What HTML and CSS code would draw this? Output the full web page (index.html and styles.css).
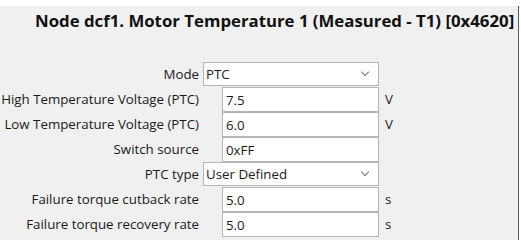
FILE: index.html
```html
<!DOCTYPE html>
<html lang="en">
<head>
  <meta charset="UTF-8">
  <title>Motor Temperature 1</title>
  <link rel="stylesheet" href="styles.css">
</head>
<body>
  <div class="panel">
    <h1>Node dcf1. Motor Temperature 1 (Measured - T1) [0x4620]</h1>

    <div class="form">
      <label>Mode</label>
      <div class="select"><span>PTC</span><span class="caret"></span></div>
      <span></span>

      <label>High Temperature Voltage (PTC)</label>
      <input type="text" value="7.5">
      <span class="unit">V</span>

      <label>Low Temperature Voltage (PTC)</label>
      <input type="text" value="6.0">
      <span class="unit">V</span>

      <label>Switch source</label>
      <input type="text" value="0xFF">
      <span></span>

      <label>PTC type</label>
      <div class="select"><span>User Defined</span><span class="caret"></span></div>
      <span></span>

      <label>Failure torque cutback rate</label>
      <input type="text" value="5.0">
      <span class="unit">s</span>

      <label>Failure torque recovery rate</label>
      <input type="text" value="5.0">
      <span class="unit">s</span>
    </div>
  </div>
</body>
</html>
```

FILE: styles.css
```css
body {
  margin: 0;
  background: #ffffff;
  font-family: 'Open Sans', 'Noto Sans', sans-serif;
  color: #1a1a1a;
}

.panel {
  width: 518px;
  height: 234px;
  margin-top: 6px;
  background: #f0f0f0;
  border-right: 1px solid #5a5a5a;
  overflow: hidden;
}

h1 {
  margin: 0;
  padding: 4px 0 0 35px;
  font-size: 16.8px;
  font-weight: bold;
  line-height: 21px;
  color: #111;
  white-space: nowrap;
}

.form {
  display: grid;
  grid-template-columns: 199px 176px 1fr;
  column-gap: 4px;
  margin-top: 31px;
  font-size: 13.3px;
}

.form label {
  display: flex;
  justify-content: flex-end;
  line-height: 25px;
  white-space: nowrap;
}

.form input {
  box-sizing: border-box;
  width: 157px;
  height: 25px;
  margin: 0 0 0 19px;
  padding: 0 3px;
  border: 1px solid #b4b4b4;
  background: #fff;
  font: inherit;
  color: #1a1a1a;
}

.select {
  box-sizing: border-box;
  height: 24px;
  margin-bottom: 1px;
  padding: 0 2px;
  border: 1px solid #b4b4b4;
  background: #fff;
  display: flex;
  align-items: center;
  justify-content: space-between;
  line-height: 22px;
}

.caret {
  width: 5px;
  height: 5px;
  margin: 0 8px 4px 0;
  border-right: 1px solid #777;
  border-bottom: 1px solid #777;
  transform: rotate(45deg);
}

.unit {
  line-height: 25px;
  padding-left: 2px;
}
```
